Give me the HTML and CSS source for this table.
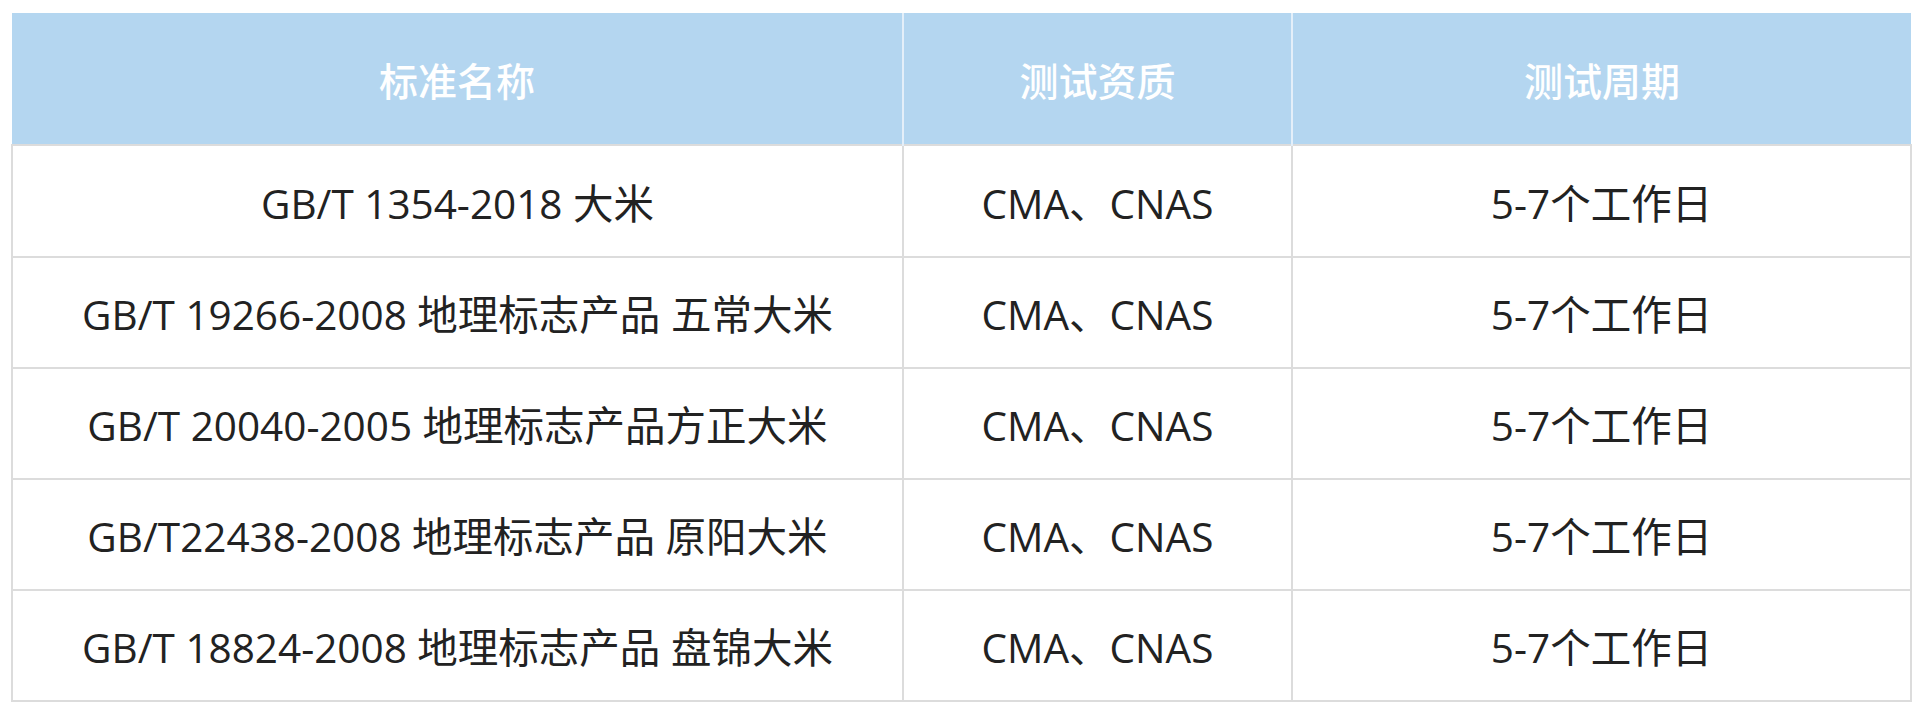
FILE: index.html
```html
<!DOCTYPE html>
<html lang="zh-CN">
<head>
<meta charset="utf-8">
<title>标准</title>
<link rel="stylesheet" href="styles.css">
</head>
<body>
<table class="std-table">
  <colgroup>
    <col class="c1"><col class="c2"><col class="c3">
  </colgroup>
  <thead>
    <tr class="head-row">
      <th>标准名称</th>
      <th>测试资质</th>
      <th>测试周期</th>
    </tr>
  </thead>
  <tbody>
    <tr class="first"><td>GB/T 1354-2018 大米</td><td>CMA、CNAS</td><td>5-7个工作日</td></tr>
    <tr><td>GB/T 19266-2008 地理标志产品 五常大米</td><td>CMA、CNAS</td><td>5-7个工作日</td></tr>
    <tr><td>GB/T 20040-2005 地理标志产品方正大米</td><td>CMA、CNAS</td><td>5-7个工作日</td></tr>
    <tr><td>GB/T22438-2008 地理标志产品 原阳大米</td><td>CMA、CNAS</td><td>5-7个工作日</td></tr>
    <tr><td>GB/T 18824-2008 地理标志产品 盘锦大米</td><td>CMA、CNAS</td><td>5-7个工作日</td></tr>
  </tbody>
</table>
</body>
</html>
```
FILE: styles.css
```css
html, body {
  margin: 0;
  background: #ffffff;
}
body {
  padding: 13px 10px 0 11px;
  font-family: "Open Sans", "Noto Sans CJK SC", sans-serif;
}
.std-table {
  width: 1899px;
  border-collapse: collapse;
  table-layout: fixed;
}
.c1 { width: 891px; }
.c2 { width: 389px; }
.c3 { width: 619px; }
.head-row th {
  height: 131px;
  padding: 0;
  background: #b4d6f0;
  color: #ffffff;
  font-size: 39px;
  font-weight: 500;
  text-align: center;
  vertical-align: middle;
  border-left: 2px solid #e4eff9;
  border-right: 2px solid #e4eff9;
}
.head-row th:first-child { border-left: none; }
.head-row th:last-child { border-right: none; }
.std-table td {
  height: 109px;
  padding: 0;
  color: #222222;
  font-size: 40.5px;
  font-weight: 400;
  text-align: center;
  vertical-align: middle;
  border: 2px solid #dcdcdc;
}
.std-table tr.first td { height: 110px; }
```
